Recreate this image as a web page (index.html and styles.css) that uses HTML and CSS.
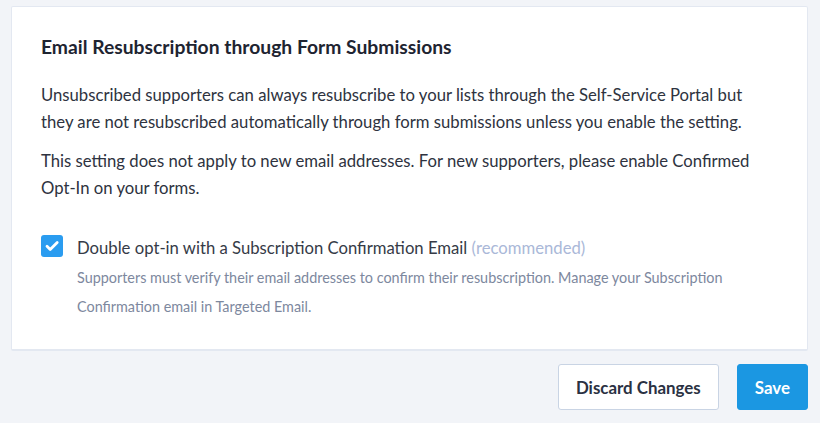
FILE: index.html
```html
<!DOCTYPE html>
<html lang="en">
<head>
<meta charset="utf-8">
<title>Email Resubscription</title>
<link rel="stylesheet" href="styles.css">
</head>
<body>
<div class="page">
  <section class="card">
    <h2 class="card-title">Email Resubscription through Form Submissions</h2>
    <p class="text">Unsubscribed supporters can always resubscribe to your lists through the Self-Service Portal but they are not resubscribed automatically through form submissions unless you enable the setting.</p>
    <p class="text">This setting does not apply to new email addresses. For new supporters, please enable Confirmed Opt-In on your forms.</p>
    <div class="option">
      <span class="checkbox">
        <svg viewBox="0 0 22 22" width="22" height="22"><path d="M6 11.2l3.2 3.2L16.2 7.4" fill="none" stroke="#fff" stroke-width="2.8" stroke-linecap="round" stroke-linejoin="round"/></svg>
      </span>
      <div class="option-body">
        <div class="option-label">Double opt-in with a Subscription Confirmation Email <span class="muted">(recommended)</span></div>
        <div class="option-help">Supporters must verify their email addresses to confirm their resubscription. Manage your Subscription Confirmation email in Targeted Email.</div>
      </div>
    </div>
  </section>
  <div class="actions">
    <button class="btn btn-secondary">Discard Changes</button>
    <button class="btn btn-primary">Save</button>
  </div>
</div>
</body>
</html>
```

FILE: styles.css
```css
html, body {
  margin: 0;
  padding: 0;
  background: #f2f4f8;
}
body {
  font-family: Lato, "Open Sans", sans-serif;
  color: #2e3340;
}
.page {
  padding: 6px 12px 0 11px;
}
.card {
  background: #fff;
  border: 1px solid #e3e8f1;
  border-bottom-width: 2px;
  border-radius: 2px;
  padding: 27px 29px 28px 29px;
}
.card-title {
  margin: 0 0 22px;
  font-size: 19.3px;
  font-weight: 700;
  color: #1e2431;
  line-height: 26px;
}
.text {
  margin: 0 0 12px;
  font-size: 16.7px;
  line-height: 27px;
  color: #2e3340;
}
.option {
  display: flex;
  gap: 14px;
  margin-top: 33px;
}
.checkbox {
  flex: none;
  width: 22px;
  height: 22px;
  border-radius: 3px;
  background: #2a9cf0;
  display: flex;
}
.option-label {
  font-size: 16.7px;
  line-height: 24px;
  color: #363b47;
  margin-top: 1px;
}
.muted {
  color: #aab8d8;
}
.option-help {
  margin-top: 3px;
  font-size: 14.4px;
  line-height: 29px;
  color: #7d889e;
}
.actions {
  display: flex;
  justify-content: flex-end;
  gap: 18px;
  margin-top: 13px;
}
.btn {
  font-family: Lato, "Open Sans", sans-serif;
  font-size: 16.9px;
  font-weight: 700;
  height: 46px;
  border-radius: 3px;
  padding: 0 17px;
  cursor: pointer;
}
.btn-secondary {
  background: #fff;
  border: 1px solid #c9d4e4;
  color: #2a3142;
}
.btn-primary {
  background: #1b97e2;
  border: 1px solid #1b97e2;
  color: #fff;
}
```
